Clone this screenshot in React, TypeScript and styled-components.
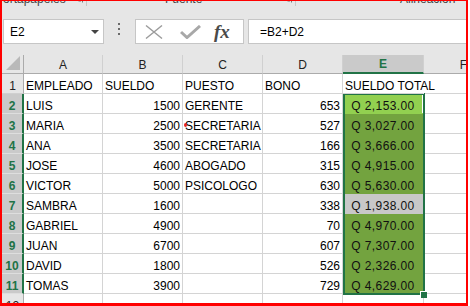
import React from 'react';
import styled, { createGlobalStyle } from 'styled-components';

const Global = createGlobalStyle`
  html, body { margin: 0; padding: 0; background: #ffffff; }
  body { font-family: "Liberation Sans", Arial, sans-serif; }
`;

const Frame = styled.div`
  width: 468px;
  height: 306px;
  box-sizing: border-box;
  border: 2px solid #ff0000;
  border-top-width: 1px;
  border-bottom-width: 3px;
  overflow: hidden;
  background: #e6e6e6;
  display: flex;
  flex-direction: column;
`;

/* ---------- ribbon remnant ---------- */
const Ribbon = styled.div`
  height: 9px;
  flex-shrink: 0;
  display: flex;
  align-items: flex-start;
`;

const RibbonGroup = styled.div<{ $w: number; $pad: number }>`
  width: ${p => p.$w}px;
  flex-shrink: 0;
  height: 5px;
  box-sizing: border-box;
  padding-left: ${p => p.$pad}px;
  padding-right: 3px;
  display: flex;
  align-items: flex-start;
  border-right: 1px solid #c6c6c6;
`;

const RibbonLabel = styled.span<{ $shift?: number }>`
  font-size: 12px;
  line-height: 12px;
  margin-top: -8px;
  margin-left: ${p => p.$shift ?? 0}px;
  color: #444444;
  white-space: nowrap;
`;

const Launcher = styled.svg`
  margin-left: auto;
  margin-top: -5px;
  flex-shrink: 0;
`;

/* ---------- formula bar ---------- */
const FormulaBar = styled.div`
  height: 45px;
  flex-shrink: 0;
  box-sizing: border-box;
  padding: 9px 0 0 1px;
  display: flex;
  align-items: flex-start;
`;

const Box = styled.div`
  height: 25px;
  box-sizing: border-box;
  background: #ffffff;
  border: 1px solid #c6c6c6;
  display: flex;
  align-items: center;
  font-size: 12px;
  color: #000000;
`;

const NameBox = styled(Box)`
  width: 101px;
  padding: 0 4px 0 6px;
`;

const DropArrow = styled.span`
  margin-left: auto;
  width: 0;
  height: 0;
  border-left: 4px solid transparent;
  border-right: 4px solid transparent;
  border-top: 4px solid #444444;
`;

const Dots = styled.div`
  margin: 4px 0 0 14px;
  display: flex;
  flex-direction: column;
  gap: 3px;
`;

const Dot = styled.span`
  width: 2px;
  height: 2px;
  background: #6a6a6a;
`;

const IconBox = styled(Box)`
  width: 109px;
  margin-left: 15px;
`;

const IconSvg = styled.svg<{ $ml: number }>`
  margin-left: ${p => p.$ml}px;
  flex-shrink: 0;
`;

const Fx = styled.span`
  margin-left: 13px;
  font-family: "Liberation Serif", "Times New Roman", serif;
  font-style: italic;
  font-weight: 700;
  font-size: 19px;
  color: #4a4a4a;
  line-height: 20px;
`;

const FormulaInput = styled(Box)`
  flex: 1;
  margin-left: 4px;
  margin-right: -40px;
  padding-left: 11px;
`;

/* ---------- sheet ---------- */
const Sheet = styled.div`
  position: relative;
  display: grid;
  grid-template-columns: 22px 79px 80px 80px 80px 81px 80px;
  grid-template-rows: 19px repeat(12, 20px);
  background: #ffffff;
  font-size: 12px;
`;

const Corner = styled.div`
  box-sizing: border-box;
  background: #e6e6e6;
  border-right: 1px solid #ababab;
  border-bottom: 1px solid #ababab;
  display: flex;
  align-items: flex-end;
  justify-content: flex-end;
  padding: 0 3px 3px 0;
`;

const CornerTriangle = styled.span`
  width: 0;
  height: 0;
  border-left: 14px solid transparent;
  border-bottom: 14px solid #b9b9b9;
`;

const ColHead = styled.div<{ $sel?: boolean }>`
  box-sizing: border-box;
  background: ${p => (p.$sel ? '#cacaca' : '#e6e6e6')};
  border-right: 1px solid #d0d0d0;
  border-bottom: ${p => (p.$sel ? '2px solid #217346' : '1px solid #ababab')};
  display: flex;
  align-items: center;
  justify-content: center;
  color: ${p => (p.$sel ? '#217346' : '#222222')};
  font-weight: ${p => (p.$sel ? 700 : 400)};
  padding-top: 1px;
`;

const RowHead = styled.div<{ $sel?: boolean }>`
  box-sizing: border-box;
  background: ${p => (p.$sel ? '#cacaca' : '#e6e6e6')};
  border-bottom: 1px solid ${p => (p.$sel ? '#dedede' : '#d0d0d0')};
  border-right: ${p => (p.$sel ? '2px solid #217346' : '1px solid #ababab')};
  display: flex;
  align-items: flex-end;
  justify-content: center;
  line-height: 14px;
  color: ${p => (p.$sel ? '#217346' : '#222222')};
  font-weight: ${p => (p.$sel ? 700 : 400)};
`;

const Cell = styled.div<{ $align?: 'left' | 'right' | 'center'; $fill?: string; $spill?: boolean; $active?: boolean }>`
  position: relative;
  box-sizing: border-box;
  background: ${p => p.$fill ?? '#ffffff'};
  border-bottom: 1px solid ${p => p.$fill ?? '#d4d4d4'};
  border-right: 1px solid ${p => (p.$spill ? 'transparent' : p.$fill ?? '#d4d4d4')};
  display: flex;
  align-items: flex-end;
  justify-content: ${p => (p.$align === 'right' ? 'flex-end' : p.$align === 'center' ? 'center' : 'flex-start')};
  padding: 0 2px;
  line-height: 14px;
  letter-spacing: ${p => (p.$fill ? '0.4px' : '0')};
  white-space: nowrap;
  overflow: ${p => (p.$spill ? 'visible' : 'hidden')};
  z-index: ${p => (p.$spill ? 1 : 'auto')};
  color: ${p => (p.$fill ? '#111111' : '#000000')};
  box-shadow: ${p => (p.$active ? 'inset 1px 1px 0 #ffffff, inset -1px 0 0 #ffffff' : 'none')};
`;

const Mark = styled.span`
  position: absolute;
  left: 1px;
  top: 9px;
  width: 3px;
  height: 4px;
  border-radius: 50%;
  background: #e8231f;
`;

const Selection = styled.div`
  position: absolute;
  left: 341px;
  top: 38px;
  width: 82px;
  height: 202px;
  box-sizing: border-box;
  border: 2px solid #217346;
  pointer-events: none;
`;

const FillHandle = styled.div`
  position: absolute;
  left: 418px;
  top: 236px;
  width: 7px;
  height: 7px;
  box-sizing: border-box;
  background: #217346;
  border-left: 1px solid #ffffff;
  border-top: 1px solid #ffffff;
`;

type Row = { a: string; b: string; c: string; d: string; e: string };

const rows: Row[] = [
  { a: 'LUIS', b: '1500', c: 'GERENTE', d: '653', e: 'Q 2,153.00' },
  { a: 'MARIA', b: '2500', c: 'SECRETARIA', d: '527', e: 'Q 3,027.00' },
  { a: 'ANA', b: '3500', c: 'SECRETARIA', d: '166', e: 'Q 3,666.00' },
  { a: 'JOSE', b: '4600', c: 'ABOGADO', d: '315', e: 'Q 4,915.00' },
  { a: 'VICTOR', b: '5000', c: 'PSICOLOGO', d: '630', e: 'Q 5,630.00' },
  { a: 'SAMBRA', b: '1600', c: '', d: '338', e: 'Q 1,938.00' },
  { a: 'GABRIEL', b: '4900', c: '', d: '70', e: 'Q 4,970.00' },
  { a: 'JUAN', b: '6700', c: '', d: '607', e: 'Q 7,307.00' },
  { a: 'DAVID', b: '1800', c: '', d: '526', e: 'Q 2,326.00' },
  { a: 'TOMAS', b: '3900', c: '', d: '729', e: 'Q 4,629.00' },
];

const fillFor = (i: number) => (i === 0 ? '#92d050' : i === 5 ? '#c8c8c8' : '#73a33f');

const LauncherIcon = () => (
  <Launcher width="7" height="7" viewBox="0 0 7 7">
    <path d="M0.5 0.5 H6.5 V6.5" fill="none" stroke="#777" strokeWidth="1" />
    <path d="M1.5 1.5 L5 5 M2.5 5 H5 V2.5" fill="none" stroke="#777" strokeWidth="1" />
  </Launcher>
);

export default function App() {
  return (
    <>
      <Global />
      <Frame>
        <Ribbon>
          <RibbonGroup $w={85} $pad={0}>
            <RibbonLabel $shift={-7}>Portapapeles</RibbonLabel>
            <LauncherIcon />
          </RibbonGroup>
          <RibbonGroup $w={209} $pad={78}>
            <RibbonLabel>Fuente</RibbonLabel>
            <LauncherIcon />
          </RibbonGroup>
          <RibbonGroup $w={200} $pad={104}>
            <RibbonLabel>Alineación</RibbonLabel>
          </RibbonGroup>
        </Ribbon>

        <FormulaBar>
          <NameBox>
            E2
            <DropArrow />
          </NameBox>
          <Dots>
            <Dot />
            <Dot />
            <Dot />
          </Dots>
          <IconBox>
            <IconSvg $ml={9} width="18" height="14" viewBox="0 0 18 14">
              <path d="M1 0.5 L17 13.5 M17 0.5 L1 13.5" stroke="#9c9c9c" strokeWidth="1.4" fill="none" />
            </IconSvg>
            <IconSvg $ml={17} width="21" height="14" viewBox="0 0 21 14">
              <path d="M1 7 L7 12.5 L20 1" stroke="#a8a8a8" strokeWidth="3" fill="none" />
            </IconSvg>
            <Fx>fx</Fx>
          </IconBox>
          <FormulaInput>=B2+D2</FormulaInput>
        </FormulaBar>

        <Sheet>
          <Corner>
            <CornerTriangle />
          </Corner>
          <ColHead>A</ColHead>
          <ColHead>B</ColHead>
          <ColHead>C</ColHead>
          <ColHead>D</ColHead>
          <ColHead $sel>E</ColHead>
          <ColHead>F</ColHead>

          <RowHead>1</RowHead>
          <Cell>EMPLEADO</Cell>
          <Cell>SUELDO</Cell>
          <Cell>PUESTO</Cell>
          <Cell>BONO</Cell>
          <Cell $spill>SUELDO TOTAL</Cell>
          <Cell />

          {rows.map((r, i) => (
            <React.Fragment key={r.a}>
              <RowHead $sel>{i + 2}</RowHead>
              <Cell>{r.a}</Cell>
              <Cell $align="right">{r.b}</Cell>
              <Cell>
                {i === 1 && <Mark />}
                {r.c}
              </Cell>
              <Cell $align="right">{r.d}</Cell>
              <Cell $align="center" $fill={fillFor(i)} $active={i === 0}>
                {r.e}
              </Cell>
              <Cell />
            </React.Fragment>
          ))}

          <RowHead>12</RowHead>
          <Cell />
          <Cell />
          <Cell />
          <Cell />
          <Cell />
          <Cell />

          <Selection />
          <FillHandle />
        </Sheet>
      </Frame>
    </>
  );
}
